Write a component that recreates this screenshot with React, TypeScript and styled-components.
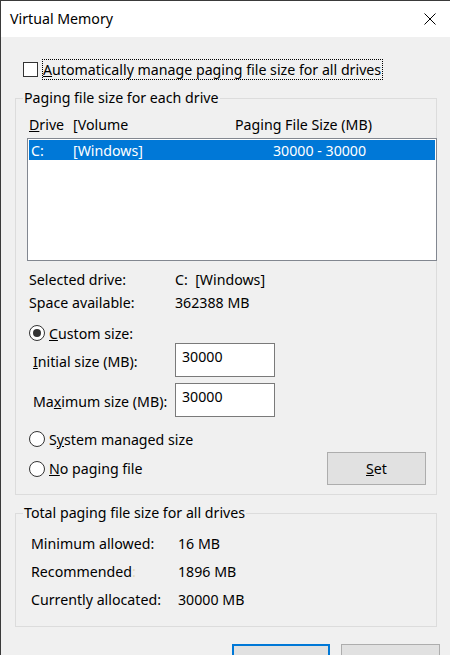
import styled, { createGlobalStyle } from 'styled-components';

const GlobalStyle = createGlobalStyle`
  html, body {
    margin: 0;
    padding: 0;
    overflow: hidden;
    background: #f0f0f0;
  }
  body {
    font-family: 'Noto Sans', 'Open Sans', sans-serif;
    font-size: 14.2px;
    color: #000;
  }
  * {
    box-sizing: border-box;
  }
`;

export default function App() {
  return (
    <>
      <GlobalStyle />
      <Window>
        <TitleBar>
          <Title>Virtual Memory</Title>
          <CloseButton>
            <svg width="12" height="12" viewBox="0 0 12 12">
              <path d="M0.5 0.5 L11.5 11.5 M11.5 0.5 L0.5 11.5" stroke="#000" strokeWidth="1" fill="none" />
            </svg>
          </CloseButton>
        </TitleBar>

        <Body>
          <CheckRow>
            <CheckBox />
            <FocusLabel>
              <u>A</u>utomatically manage paging file size for all drives
            </FocusLabel>
          </CheckRow>

          <Group $mt={18} $pt={0} $pb={9}>
            <Legend>Paging file size for each drive</Legend>
            <HeaderRow>
              <span>
                <u>D</u>rive
              </span>
              <span>[Volume</span>
              <span>Paging File Size (MB)</span>
            </HeaderRow>
            <ListBox>
              <ListRow>
                <span>C:</span>
                <span>[Windows]</span>
                <span>30000 - 30000</span>
              </ListRow>
            </ListBox>

            <InfoRow $mt={8}>
              <span>Selected drive:</span>
              <span>C:&nbsp;&nbsp;[Windows]</span>
            </InfoRow>
            <InfoRow $mt={3}>
              <span>Space available:</span>
              <span>362388 MB</span>
            </InfoRow>

            <RadioRow $mt={11}>
              <Radio $checked />
              <span>
                <u>C</u>ustom size:
              </span>
            </RadioRow>
            <SizeRow $mt={0}>
              <SizeLabel>
                <u>I</u>nitial size (MB):
              </SizeLabel>
              <SizeInput>30000</SizeInput>
            </SizeRow>
            <SizeRow $mt={6}>
              <SizeLabel>
                Ma<u>x</u>imum size (MB):
              </SizeLabel>
              <SizeInput>30000</SizeInput>
            </SizeRow>

            <RadioRow $mt={12}>
              <Radio />
              <span>
                S<u>y</u>stem managed size
              </span>
            </RadioRow>
            <LastRow>
              <RadioInline>
                <Radio />
                <span>
                  <u>N</u>o paging file
                </span>
              </RadioInline>
              <SetButton>
                <u>S</u>et
              </SetButton>
            </LastRow>
          </Group>

          <Group $mt={18} $pt={19} $pb={17}>
            <Legend>Total paging file size for all drives</Legend>
            <SummaryList>
              <SummaryRow>
                <span>Minimum allowed:</span>
                <span>16 MB</span>
              </SummaryRow>
              <SummaryRow>
                <span>
                  Recommended<FaintColon>:</FaintColon>
                </span>
                <span>1896 MB</span>
              </SummaryRow>
              <SummaryRow>
                <span>Currently allocated:</span>
                <span>30000 MB</span>
              </SummaryRow>
            </SummaryList>
          </Group>

          <Footer>
            <DialogButton $primary aria-label="OK" />
            <DialogButton aria-label="Cancel" />
          </Footer>
        </Body>
      </Window>
    </>
  );
}

const Window = styled.div`
  width: 450px;
  height: 655px;
  overflow: hidden;
  border-top: 1px solid #3a3a3a;
  border-left: 1px solid #3a3a3a;
  background: #f0f0f0;
  display: flex;
  flex-direction: column;
`;

const TitleBar = styled.div`
  height: 36px;
  flex-shrink: 0;
  background: #fff;
  display: flex;
  align-items: center;
  padding-left: 9px;
`;

const Title = styled.span`
  font-size: 14.2px;
  line-height: 20px;
`;

const CloseButton = styled.div`
  margin-left: auto;
  width: 40px;
  height: 36px;
  display: flex;
  align-items: center;
  justify-content: center;
  svg {
    display: block;
  }
`;

const Body = styled.div`
  padding-left: 14px;
  display: flex;
  flex-direction: column;
`;

const CheckRow = styled.div`
  margin-top: 22px;
  height: 21px;
  padding-left: 8px;
  display: flex;
  align-items: center;
`;

const CheckBox = styled.span`
  width: 15px;
  height: 15px;
  border: 1px solid #333;
  background: #fff;
  flex-shrink: 0;
`;

const FocusLabel = styled.span`
  margin-left: 4px;
  height: 21px;
  display: flex;
  align-items: center;
  border: 1px dotted #000;
  padding: 0 1px 0 0;
  white-space: nowrap;
`;

const Group = styled.div<{ $mt: number; $pt: number; $pb: number }>`
  position: relative;
  width: 422px;
  margin-top: ${(p) => p.$mt}px;
  padding-top: ${(p) => p.$pt}px;
  padding-bottom: ${(p) => p.$pb}px;
  border: 1px solid #dcdcdc;
  display: flex;
  flex-direction: column;
`;

const Legend = styled.span`
  position: absolute;
  top: -11px;
  left: 7px;
  padding: 0 1px;
  line-height: 20px;
  background: #f0f0f0;
  white-space: nowrap;
`;

const HeaderRow = styled.div`
  margin-top: 15px;
  height: 20px;
  padding-left: 13px;
  display: grid;
  grid-template-columns: 44px 162px auto;
  align-items: center;
  white-space: nowrap;
`;

const ListBox = styled.div`
  margin: 4px -1px 0 11px;
  height: 123px;
  border: 1px solid #828790;
  background: #fff;
  padding: 1px;
`;

const ListRow = styled.div`
  height: 20px;
  background: #0078d7;
  color: #fff;
  padding-left: 2px;
  display: grid;
  grid-template-columns: 42px 200px auto;
  align-items: center;
  white-space: nowrap;
`;

const InfoRow = styled.div<{ $mt: number }>`
  margin-top: ${(p) => p.$mt}px;
  height: 20px;
  padding-left: 13px;
  display: grid;
  grid-template-columns: 146px auto;
  align-items: center;
  white-space: nowrap;
`;

const RadioRow = styled.div<{ $mt: number }>`
  margin-top: ${(p) => p.$mt}px;
  height: 20px;
  padding-left: 13px;
  display: flex;
  align-items: center;
  gap: 4px;
  white-space: nowrap;
`;

const RadioInline = styled.div`
  display: flex;
  align-items: center;
  gap: 4px;
  white-space: nowrap;
`;

const Radio = styled.span<{ $checked?: boolean }>`
  width: 16px;
  height: 16px;
  flex-shrink: 0;
  border: 1px solid #333;
  border-radius: 50%;
  background: #fff;
  display: flex;
  align-items: center;
  justify-content: center;
  &::after {
    content: '';
    width: 8px;
    height: 8px;
    border-radius: 50%;
    background: #333;
    display: ${(p) => (p.$checked ? 'block' : 'none')};
  }
`;

const SizeRow = styled.div<{ $mt: number }>`
  margin-top: ${(p) => p.$mt}px;
  height: 34px;
  padding-left: 17px;
  display: flex;
  align-items: center;
  white-space: nowrap;
`;

const SizeLabel = styled.span`
  width: 142px;
  padding-top: 3px;
`;

const SizeInput = styled.div`
  width: 100px;
  height: 34px;
  border: 1px solid #7a7a7a;
  background: #fff;
  padding: 3px 0 0 6px;
  line-height: 20px;
`;

const LastRow = styled.div`
  margin-top: 3px;
  height: 33px;
  padding-left: 13px;
  padding-right: 10px;
  display: flex;
  align-items: center;
`;

const SetButton = styled.div`
  margin-left: auto;
  width: 99px;
  height: 33px;
  border: 1px solid #adadad;
  background: #e1e1e1;
  display: flex;
  align-items: center;
  justify-content: center;
`;

const SummaryList = styled.div`
  padding-left: 15px;
  display: flex;
  flex-direction: column;
  gap: 8px;
`;

const SummaryRow = styled.div`
  height: 20px;
  display: grid;
  grid-template-columns: 147px auto;
  align-items: center;
  white-space: nowrap;
`;

const FaintColon = styled.span`
  color: #e6d9b8;
`;

const Footer = styled.div`
  margin-top: 17px;
  padding-right: 10px;
  display: flex;
  justify-content: flex-end;
  gap: 11px;
`;

const DialogButton = styled.div<{ $primary?: boolean }>`
  width: ${(p) => (p.$primary ? 98 : 99)}px;
  height: 32px;
  flex-shrink: 0;
  border: ${(p) => (p.$primary ? '2px solid #0078d7' : '1px solid #adadad')};
  background: #e1e1e1;
`;
